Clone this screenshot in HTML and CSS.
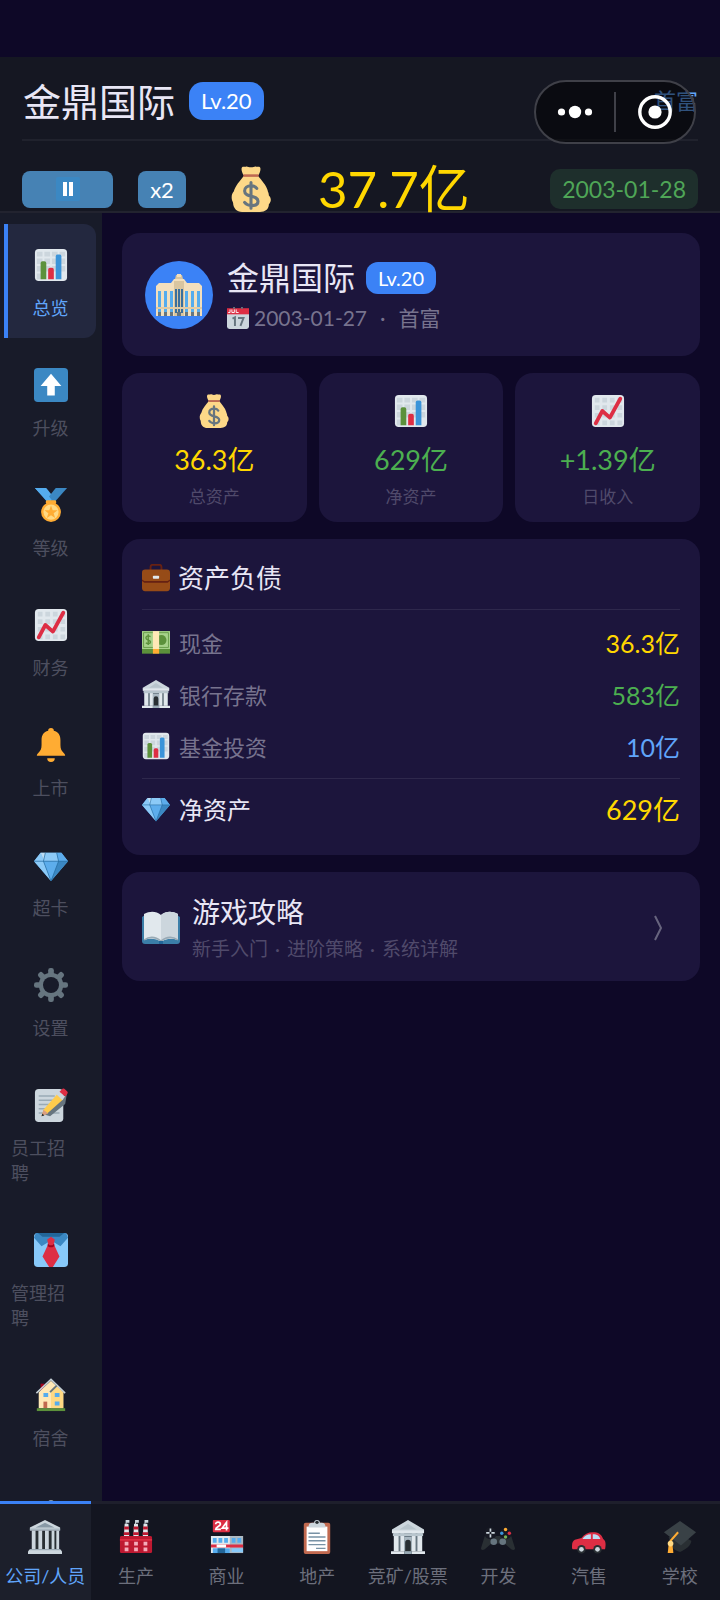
FILE: index.html
```html
<!DOCTYPE html>
<html lang="zh-CN">
<head>
<meta charset="utf-8">
<meta name="viewport" content="width=device-width, initial-scale=1">
<title>金鼎国际</title>
<link rel="stylesheet" href="styles.css">
</head>
<body>
<svg class="sprite" aria-hidden="true">
  <symbol id="chart" viewBox="0 0 36 36">
    <rect x="1" y="1" width="34" height="34" rx="4" fill="#e1e8ed"/>
    <path d="M3 4h6v5H3zM11 4h6v5h-6zM19 4h6v5h-6zM27 4h6v5h-6zM3 11h6v6H3zM11 11h6v6h-6zM19 11h6v6h-6zM27 11h6v6h-6zM3 19h6v6H3zM11 19h6v6h-6zM19 19h6v6h-6zM27 19h6v6h-6zM3 27h6v6H3z" fill="#ccd6dd"/>
    <path d="M7 33V16a2 2 0 0 1 2-2h2a2 2 0 0 1 2 2v17z" fill="#5c913b"/>
    <path d="M15 33V23a2 2 0 0 1 2-2h2a2 2 0 0 1 2 2v10z" fill="#dd2e44"/>
    <path d="M23 33V9a2 2 0 0 1 2-2h2a2 2 0 0 1 2 2v24z" fill="#3b94d9"/>
  </symbol>
  <symbol id="trend" viewBox="0 0 36 36">
    <rect x="1" y="1" width="34" height="34" rx="4" fill="#e1e8ed"/>
    <path d="M4 4h5v5H4zM12 4h5v5h-5zM20 4h5v5h-5zM28 4h5v5h-5zM4 12h5v5H4zM12 12h5v5h-5zM20 12h5v5h-5zM28 12h5v5h-5zM4 20h5v5H4zM12 20h5v5h-5zM20 20h5v5h-5zM28 20h5v5h-5zM4 28h5v5H4zM12 28h5v5h-5zM20 28h5v5h-5zM28 28h5v5h-5z" fill="#ccd6dd"/>
    <path d="M5 31l7-13 8 7L31 5" fill="none" stroke="#dd2e44" stroke-width="4" stroke-linecap="round" stroke-linejoin="round"/>
  </symbol>
  <symbol id="bag" viewBox="0 0 36 36">
    <path d="M32 23c0-2-1-3-1-4-1-4-5-8-8-12H13C9 12 6 15 4.500 20c-1 1-2 3-1.500 6 0 1 1 2 1 3 0 4 3 7 7 7h14c4 0 7-2 7-6 2-2 2-5 0-7z" fill="#fdd888"/>
    <path d="M12 7c-1-2-2-5-1-6s2 0 3-.5 2 .5 4 .5 3-1 4-.5 2-.5 3 .5 0 4-1 6z" fill="#fdd888"/>
    <path d="M12 6.500h12v2H12z" fill="#bf6952"/>
    <path d="M22.500 17.500c-1-1.500-3-2-4.500-2-3 0-5 1.500-5 4 0 5.500 10.500 3 10.500 8 0 2.500-2.500 3.500-5 3.500-2 0-4-.5-5.500-2.500M18 13v20" fill="none" stroke="#67757f" stroke-width="2.400" stroke-linecap="round"/>
  </symbol>
  <symbol id="gem" viewBox="0 0 36 36">
    <path d="M7 5h22l7 9-18 21L0 14z" fill="#5dadec"/>
    <path d="M7 5l4 9H0z" fill="#8ccaf7"/><path d="M7 5h5l-1 9z" fill="#bdddf4"/>
    <path d="M12 5h12l2 9H10z" fill="#8ccaf7"/><path d="M29 5l7 9H26l-2-9z" fill="#5dadec"/>
    <path d="M0 14h10l8 21z" fill="#8ccaf7"/><path d="M10 14h16l-8 21z" fill="#5dadec"/><path d="M26 14h10L18 35z" fill="#3b88c3"/>
    <path d="M0 14h36M12 5l-2 9 8 21 8-21-2-9" fill="none" stroke="#226699" stroke-width=".7"/>
  </symbol>
  <symbol id="bank" viewBox="0 0 36 36">
    <path d="M3 14h30v19H3z" fill="#66757f"/>
    <path d="M3 14h5v19H3zM10 14h4v19h-4zM22 14h4v19h-4zM28 14h5v19h-5z" fill="#e1e8ed"/>
    <path d="M14 18h8v15h-8z" fill="#aab8c2"/><path d="M15 33V24a3 3 0 0 1 6 0v9z" fill="#292f33"/>
    <path d="M18 0l17 10v2H1v-2z" fill="#ccd6dd"/><path d="M18 4l9 6H9z" fill="#b8c5cd"/>
    <path d="M1 11h34v3H1z" fill="#e1e8ed"/><path d="M2 14h32v3H2z" fill="#b8c5cd"/>
    <path d="M0 33h14v3H0zM22 33h14v3H22z" fill="#e1e8ed"/><path d="M14 33h8v3h-8z" fill="#99aab5"/>
  </symbol>
  <symbol id="classical" viewBox="0 0 36 36">
    <path d="M4 12h28v19H4z" fill="#292f33"/>
    <path d="M4 11h4v20H4zM11 11h4v20h-4zM18 11h4v20h-4zM25 11h3v20h-3zM30 11h3v20h-3z" fill="#ccd6dd"/>
    <path d="M18 0l16 8v3H2V8z" fill="#ccd6dd"/><path d="M18 3l10 5H8z" fill="#8899a6"/>
    <path d="M2 9h32v2H2z" fill="#aab8c2"/><path d="M2 31h32l2 2v3H0v-3z" fill="#ccd6dd"/><path d="M2 31h32v1H2z" fill="#99aab5"/>
  </symbol>
  <symbol id="gear" viewBox="0 0 36 36">
    <g fill="#66757f"><rect x="15" y="0" width="6" height="36" rx="2.500"/><rect x="15" y="0" width="6" height="36" rx="2.500" transform="rotate(45 18 18)"/><rect x="15" y="0" width="6" height="36" rx="2.500" transform="rotate(90 18 18)"/><rect x="15" y="0" width="6" height="36" rx="2.500" transform="rotate(135 18 18)"/><circle cx="18" cy="18" r="13"/></g>
    <circle cx="18" cy="18" r="8.500" fill="#181b29"/>
  </symbol>
</svg>

<div class="app">
  <header class="header">
    <div class="title-row">
      <h1 class="company">金鼎国际</h1>
      <span class="level">Lv.20</span>
      <span class="rank">首富</span>
      <div class="capsule">
        <button class="capsule-btn" aria-label="更多"><svg width="36" height="16" viewBox="0 0 36 16" fill="#fff"><circle cx="4.500" cy="8" r="3.600"/><circle cx="18" cy="8" r="6.200"/><circle cx="31.500" cy="8" r="3.600"/></svg></button>
        <span class="capsule-line"></span>
        <button class="capsule-btn" aria-label="关闭"><svg width="34" height="34" viewBox="0 0 34 34"><circle cx="17" cy="17" r="15.200" fill="none" stroke="#fff" stroke-width="3.400"/><circle cx="17" cy="17" r="6.600" fill="#fff"/></svg></button>
      </div>
    </div>
    <div class="money-row">
      <button class="control pause" aria-label="暂停"><svg width="24" height="24" viewBox="0 0 24 24"><rect width="24" height="24" rx="2" fill="#3b88c3"/><path d="M7 5h4v14H7zM13 5h4v14h-4z" fill="#fff"/></svg></button>
      <button class="control speed">x2</button>
      <svg class="money-icon"><use href="#bag"/></svg>
      <strong class="money">37.7亿</strong>
      <time class="today">2003-01-28</time>
    </div>
  </header>

  <div class="body">
    <nav class="sidebar">
      <button class="side-item active"><svg class="icon"><use href="#chart"/></svg><span>总览</span></button>
      <button class="side-item"><svg class="icon" viewBox="0 0 36 36"><rect width="36" height="36" rx="4" fill="#3b88c3"/><path d="M18 6l11 13h-7v10h-8V19H7z" fill="#fff"/></svg><span>升级</span></button>
      <button class="side-item"><svg class="icon" viewBox="0 0 36 36"><path d="M1 0h12l8 10-6 6z" fill="#55acee"/><path d="M35 0H23l-8 10 6 6z" fill="#3b88c3"/><path d="M1 0h8l10 13-4 2z" fill="#55acee"/><rect x="12.500" y="13" width="11" height="4" rx="1.500" fill="#ffac33"/><circle cx="18" cy="25.500" r="10.500" fill="#ffac33"/><circle cx="18" cy="25.500" r="8" fill="#ffd983"/><path d="M18 18.500l1.800 5 5.200.1-4.200 3.200 1.600 5-4.400-3-4.400 3 1.600-5-4.200-3.200 5.200-.1z" fill="#ffac33"/></svg><span>等级</span></button>
      <button class="side-item"><svg class="icon"><use href="#trend"/></svg><span>财务</span></button>
      <button class="side-item"><svg class="icon" viewBox="0 0 36 36"><path d="M18 0a3 3 0 0 0-3 3C10 4 8 8 8 13v5c0 4-1 6-3 8-1 1-2 2-2 3.500h30c0-1.500-1-2.500-2-3.500-2-2-3-4-3-8v-5c0-5-2-9-7-10a3 3 0 0 0-3-3zM14 32h8a4 4 0 0 1-8 0z" fill="#ffac33"/></svg><span>上市</span></button>
      <button class="side-item"><svg class="icon"><use href="#gem"/></svg><span>超卡</span></button>
      <button class="side-item"><svg class="icon"><use href="#gear"/></svg><span>设置</span></button>
      <button class="side-item"><svg class="icon" viewBox="0 0 36 36"><rect x="1" y="1" width="30" height="35" rx="4" fill="#ccd6dd"/><path d="M5 8.500h17M5 13h15M5 17.500h12M5 22h9M5 26.500h22" stroke="#99aab5" stroke-width="1.500"/><path d="M11 28l21-18 3-5-2 12-16 13z" fill="#67757f"/><path d="M8 30l2-7L25 6l6 6-17 15z" fill="#ffcc4d"/><path d="M8 30l2-7 5 4z" fill="#d99e82"/><path d="M8 30l.8-3 2.200 2z" fill="#292f33"/><path d="M24 7l3-3 6 5-3 4z" fill="#ccd6dd"/><path d="M27 4l3-3c1-1 2-.5 3 .5l2 2c1 1 1 2 0 3l-2 2.500z" fill="#dd2e44"/></svg><span class="wrap">员工招聘</span></button>
      <button class="side-item"><svg class="icon" viewBox="0 0 36 36"><rect width="36" height="36" rx="4" fill="#88c9f9"/><path d="M2 0h32l2 5-8 9-10-6-10 6-8-9z" fill="#3b88c3"/><path d="M4 0h28l-5 4H9z" fill="#226699"/><path d="M14 7l4-3 4 3-1 5 6 13-7 11h-4L9 25l6-13z" fill="#dd2e44"/><path d="M14.500 11l2 2h3l2-2v3l-2 1h-3l-2-1z" fill="#a0041e"/></svg><span class="wrap">管理招聘</span></button>
      <button class="side-item"><svg class="icon" viewBox="0 0 36 36"><path d="M7 6h4v8H7z" fill="#a0041e"/><path d="M5 15L18 3l13 12v17H5z" fill="#ffe8b6"/><path d="M18 13l6-5 7 7v17H18z" fill="#ffd983"/><path d="M2.500 16L18 1.500 33 16" fill="none" stroke="#c5d0d6" stroke-width="1.600"/><path d="M17 15l7-7" stroke="#66757f" stroke-width="2"/><path d="M10 16h5v4h-5zM22 16h5v4h-5zM22 25h5v4h-5z" fill="#55acee"/><path d="M10 25h4v7h-4z" fill="#c1694f"/><path d="M3 32h30v3H3z" fill="#5c913b"/></svg><span>宿舍</span></button>
      <button class="side-item" aria-hidden="true" tabindex="-1"><svg class="icon" viewBox="0 0 36 36"><circle cx="18" cy="5" r="3" fill="#8899a6"/><path d="M4 16L18 6l14 10v18H4z" fill="#66757f"/></svg></button>
    </nav>

    <main class="main">
      <section class="card profile">
        <div class="avatar"><svg width="48" height="44" viewBox="0 0 48 44"><path d="M1 13l3-3h12l3-4h10l3 4h12l3 3v30H1z" fill="#f3dfbd"/><path d="M20 6l1-4h6l1 4z" fill="#d9c5a0"/><path d="M22 1h4v3h-4z" fill="#f3dfbd"/><path d="M19 8h10v35H19z" fill="#d9c5a0"/><path d="M3 18h3v22H3zM9 18h3v22H9zM15 18h3v22h-3zM30 18h3v22h-3zM36 18h3v22h-3zM42 18h3v22h-3z" fill="#55acee"/><path d="M20 16h2v24h-2zM23 16h2v24h-2zM26 16h2v24h-2z" fill="#3b6f9c"/><path d="M1 34h46v2H1z" fill="#e1cba4"/><path d="M3 39h3v4H3zM9 39h3v4H9zM15 39h3v4h-3zM22 39h4v4h-4zM30 39h3v4h-3zM36 39h3v4h-3zM42 39h3v4h-3z" fill="#66757f"/></svg></div>
        <div class="profile-text">
          <div class="profile-name"><h2>金鼎国际</h2><span class="level small">Lv.20</span></div>
          <p class="profile-meta"><svg width="22" height="22" viewBox="0 0 36 36"><path d="M0 9h36v23a4 4 0 0 1-4 4H4a4 4 0 0 1-4-4z" fill="#ccd6dd"/><path d="M0 2h36v10H0z" fill="#dd2e44"/><path d="M10 0h3v3h-3zM23 0h3v3h-3z" fill="#66757f"/><path d="M5 4v5H2M8 4v5h4V4M15 4v5h4" fill="none" stroke="#fff" stroke-width="1.500"/><path d="M9 19l4-2v14M18 18h9l-5 13" fill="none" stroke="#66757f" stroke-width="3.200"/></svg><time>2003-01-27</time><span>·</span><span>首富</span></p>
        </div>
      </section>

      <section class="stats">
        <div class="card stat"><svg class="icon"><use href="#bag"/></svg><strong class="gold">36.3亿</strong><span>总资产</span></div>
        <div class="card stat"><svg class="icon"><use href="#chart"/></svg><strong class="green">629亿</strong><span>净资产</span></div>
        <div class="card stat"><svg class="icon"><use href="#trend"/></svg><strong class="green">+1.39亿</strong><span>日收入</span></div>
      </section>

      <section class="card balance">
        <h2 class="balance-title"><svg class="row-icon" viewBox="0 0 36 36"><path d="M11 8V4c0-2 1-3 3-3h8c2 0 3 1 3 3v4" fill="none" stroke="#662113" stroke-width="2.500"/><rect x="0" y="7" width="36" height="28" rx="4" fill="#964b17"/><path d="M0 20l3 2h30l3-2v2l-3 2H3l-3-2z" fill="#662113"/><rect x="14" y="15" width="8" height="4" rx="1" fill="#e1e8ed"/></svg>资产负债</h2>
        <dl class="rows">
          <div class="row"><dt><svg class="row-icon" viewBox="0 0 36 36"><path d="M0 4h36v29H0z" fill="#5c913b"/><path d="M0 4h36v23H0z" fill="#a7d28b"/><path d="M2 6h32v19H2z" fill="none" stroke="#5c913b"/><circle cx="25" cy="15.500" r="6.500" fill="#5c913b"/><path d="M11 11c-4-2-6 0-6 2 0 3 6 2 6 5 0 2-4 3-6 1M8 8v14" fill="none" stroke="#5c913b" stroke-width="1.800"/><path d="M14 4h8v23h-8z" fill="#ffe8b6"/><path d="M14 27h8v6h-8z" fill="#ffac33"/></svg>现金</dt><dd class="gold">36.3亿</dd></div>
          <div class="row"><dt><svg class="row-icon"><use href="#bank"/></svg>银行存款</dt><dd class="green">583亿</dd></div>
          <div class="row"><dt><svg class="row-icon"><use href="#chart"/></svg>基金投资</dt><dd class="blue">10亿</dd></div>
          <div class="row total"><dt><svg class="row-icon"><use href="#gem"/></svg>净资产</dt><dd class="gold">629亿</dd></div>
        </dl>
      </section>

      <a class="card guide" href="#">
        <svg width="38" height="34" viewBox="0 0 38 34"><path d="M0 6l3-2h32l3 2v24c0 2-1 3-3 3H3c-2 0-3-1-3-3z" fill="#3b7ea8"/><path d="M2 3c6-3 12-3 17 1 5-4 11-4 17-1v26c-6-2-12-2-17 2-5-4-11-4-17-2z" fill="#e1e8ed"/><path d="M19 4c5-4 11-4 17-1v26c-6-2-12-2-17 2z" fill="#ccd6dd"/><path d="M2 29c6-4 12-3 17 1 5-4 11-5 17-1" fill="none" stroke="#99aab5" stroke-width="1.500"/><path d="M17 30h4v3h-4z" fill="#226699"/></svg>
        <span class="guide-text"><span class="guide-title">游戏攻略</span><span class="guide-sub"><span>新手入门</span><span>·</span><span>进阶策略</span><span>·</span><span>系统详解</span></span></span>
        <svg class="chevron" width="11" height="26" viewBox="0 0 11 26"><path d="M2 1l6 12-6 12" fill="none" stroke="#67647e" stroke-width="2"/></svg>
      </a>
    </main>
  </div>

  <footer class="footer">
    <nav class="tabs">
      <button class="tab active"><svg class="icon"><use href="#classical"/></svg><span>公司/人员</span></button>
      <button class="tab"><svg class="icon" viewBox="0 0 36 36"><path d="M6 4h4l1 16H5zM16 4h4l1 16h-6zM26 4h4l1 16h-6z" fill="#e1e8ed"/><path d="M5.500 7h5v3h-5zM5 13h6v3H5zM15.500 7h5v3h-5zM15 13h6v3h-6zM25.500 7h5v3h-5zM25 13h6v3h-6z" fill="#be1931"/><path d="M7 0h4v3H8v2H7zM17 0h4v3h-3v2h-1zM27 0h4v3h-3v2h-1z" fill="#ccd6dd"/><path d="M1 19c0-2 1-2 3-2h28c2 0 3 0 3 2v14c0 2-1 2-3 2H4c-2 0-3 0-3-2z" fill="#be1931"/><path d="M1 20h34v2H1z" fill="#dd2e44"/><path d="M6 23h4v4H6zM16 23h4v4h-4zM26 23h4v4h-4zM6 29h4v4H6zM16 29h4v4h-4zM26 29h4v4h-4z" fill="#f4abba"/></svg><span>生产</span></button>
      <button class="tab"><svg class="icon" viewBox="0 0 36 36"><rect x="3" width="18" height="13" rx="1" fill="#dd2e44"/><path d="M6 4.500c0-3 5-3 5 0 0 2-5 3-5 5.500h5.500M17.500 11V2.500L13 8.500h6.500" fill="none" stroke="#fff" stroke-width="1.800"/><path d="M1 17h34v18H1z" fill="#e1e8ed"/><path d="M21 17h14v18H21z" fill="#aab8c2"/><path d="M3 19h4v5H3zM9 19h4v5H9zM15 19h4v5h-4zM23 19h4v5h-4zM29 19h4v5h-4z" fill="#55acee"/><path d="M1 26h34v3H1z" fill="#dd2e44"/><path d="M7 26h10v3H7z" fill="#fff"/><path d="M3 30h18v5H3z" fill="#55acee"/><path d="M8 30h8v5H8z" fill="#226699"/><path d="M23 30h12v4H23z" fill="#88c9f9"/></svg><span>商业</span></button>
      <button class="tab"><svg class="icon" viewBox="0 0 36 36"><rect x="4" y="3" width="28" height="33" rx="2" fill="#c1694f"/><path d="M7 7h22v26H7z" fill="#fff"/><path d="M9 8c0-3 1-5 4-5h2a3 3 0 0 1 6 0h2c3 0 4 2 4 5z" fill="#ccd6dd"/><circle cx="18" cy="2.500" r="1.800" fill="#292f33"/><path d="M9 14h12M9 18h18M9 22h18M9 26h18M17 30h10" stroke="#7892a5" stroke-width="1.400"/></svg><span>地产</span></button>
      <button class="tab"><svg class="icon"><use href="#bank"/></svg><span>竞矿/股票</span></button>
      <button class="tab"><svg class="icon" viewBox="0 0 36 36"><path d="M4 17h28l4 13c0 2-2 2-4 1l-7-6H11l-7 6c-2 1-4 1-4-1z" fill="#292f33"/><circle cx="10" cy="14" r="6.500" fill="#171923"/><circle cx="26" cy="14" r="6.500" fill="#171923"/><circle cx="13.500" cy="23" r="3.500" fill="#66757f"/><circle cx="23" cy="23" r="3.500" fill="#66757f"/><path d="M10 9v3.500M10 15v3.500M5.500 13.700H9M11 13.700h3.500" stroke="#ccd6dd" stroke-width="1.800"/><circle cx="26" cy="10" r="1.800" fill="#ffac33"/><circle cx="22" cy="14" r="1.800" fill="#3b94d9"/><circle cx="30" cy="14" r="1.800" fill="#dd2e44"/><circle cx="26" cy="18" r="1.800" fill="#77b255"/></svg><span>开发</span></button>
      <button class="tab"><svg class="icon" viewBox="0 0 36 36"><path d="M0 28c0-4 1-6 3-7l7-2c3-4 7-6 12-6 6 0 9 2 11 7 3 2 3 6 2 11H2c-2 0-2-1-2-3z" fill="#dd2e44"/><path d="M11 20c2-3 5-5 9-5v5zM22 15c5 0 7 2 8 5h-8z" fill="#bdddf4"/><circle cx="10" cy="31" r="4.500" fill="#292f33"/><circle cx="27" cy="31" r="4.500" fill="#292f33"/><circle cx="10" cy="31" r="2.500" fill="#ccd6dd"/><circle cx="27" cy="31" r="2.500" fill="#ccd6dd"/></svg><span>汽售</span></button>
      <button class="tab"><svg class="icon" viewBox="0 0 36 36"><path d="M6 18l11-3 13 7c0 5-6 9-12 12-4-1-8-4-10-7z" fill="#292f33"/><path d="M1 13L18 1l17 12-16 14z" fill="#394146"/><path d="M16 13l-8 9v10" fill="none" stroke="#ffac33" stroke-width="2.200"/><path d="M6 26h4l1 9H5z" fill="#ffac33"/><circle cx="8" cy="25" r="3" fill="#ffd983"/></svg><span>学校</span></button>
    </nav>
  </footer>
</div>
</body>
</html>
```

FILE: styles.css
```css
* { box-sizing: border-box; margin: 0; }
body {
  background: #0e0827;
  color: #e8e6f5;
  font-family: Lato, "Noto Sans CJK SC", sans-serif;
}
button { border: 0; background: none; padding: 0; color: inherit; font-family: inherit; }
h1, h2, strong { font-weight: 400; }
svg { display: block; flex: none; }
.sprite { position: absolute; width: 0; height: 0; }
.icon { width: 34px; height: 34px; }
.gold { color: #ffd700; }
.green { color: #4caf50; }
.blue { color: #60a5fa; }

.app { display: flex; flex-direction: column; height: 100vh; padding-top: 57px; overflow: hidden; }

.header {
  flex: none;
  padding: 0 22px;
  background: #151722;
  border-bottom: 2px solid #22232f;
}
.title-row {
  position: relative;
  display: flex;
  align-items: center;
  gap: 14px;
  height: 84px;
  padding-top: 6px;
  border-bottom: 2px solid #20222d;
}
.company { font-size: 38px; line-height: 48px; margin-left: 1px; }
.level {
  padding: 0 12px;
  border-radius: 14px;
  background: #3b82f6;
  color: #fff;
  font-size: 22px;
  line-height: 38px;
}
.level.small { font-size: 20px; line-height: 32px; border-radius: 12px; }
.rank { margin-left: auto; color: #60a5fa; font-size: 22px; line-height: 32px; }
.capsule {
  position: absolute;
  top: 23px;
  right: 2px;
  display: flex;
  align-items: center;
  width: 162px;
  height: 64px;
  border: 2px solid #3f4048;
  border-radius: 32px;
  background: rgba(0, 0, 0, .5);
}
.capsule-btn { flex: 1; display: flex; justify-content: center; }
.capsule-line { width: 2px; height: 40px; background: #3f4048; }

.money-row { display: flex; align-items: center; height: 70px; padding-top: 26px; }
.control {
  display: flex;
  align-items: center;
  justify-content: center;
  height: 37px;
  border-radius: 8px;
  background: #4682b4;
  color: #fff;
  font-size: 22px;
}
.pause { width: 91px; }
.speed { width: 48px; margin-left: 25px; }
.money-icon { width: 46px; height: 46px; margin-left: 42px; }
.money { margin-left: 44px; color: #ffd700; font-size: 51px; line-height: 44px; }
.today {
  margin-left: auto;
  padding: 0 12px;
  border-radius: 10px;
  background: #1e2f2c;
  color: #4fa657;
  font-size: 23px;
  line-height: 40px;
}

.body { flex: 1; display: flex; min-height: 0; }
.sidebar {
  flex: none;
  display: flex;
  flex-direction: column;
  gap: 6px;
  width: 102px;
  padding: 11px 6px 0 4px;
  background: #181b29;
  overflow: hidden;
}
.side-item {
  flex: none;
  display: flex;
  flex-direction: column;
  align-items: center;
  gap: 14px;
  min-height: 114px;
  padding: 24px 6px 17px 3px;
  border-left: 4px solid transparent;
  border-radius: 0 12px 12px 0;
  color: #4d4f5f;
  font-size: 18px;
  line-height: 25px;
  text-align: left;
}
.side-item.active { border-left-color: #3b82f6; background: #23283f; color: #60a5fa; }
.side-item .wrap { align-self: flex-start; width: 60px; }

.main { flex: 1; min-width: 0; display: flex; flex-direction: column; gap: 17px; padding: 20px; }
.card { border-radius: 18px; background: #1c153c; }
.profile { display: flex; align-items: center; gap: 14px; height: 123px; padding: 0 23px; }
.avatar {
  display: flex;
  align-items: center;
  justify-content: center;
  width: 68px;
  height: 68px;
  border-radius: 50%;
  background: #3b82f6;
}
.profile-name { display: flex; align-items: center; gap: 11px; }
.profile-name h2 { font-size: 32px; line-height: 46px; }
.profile-meta { display: flex; align-items: center; gap: 5px; color: #77738e; font-size: 21px; line-height: 34px; }
.profile-meta span { margin-left: 8px; }

.stats { display: grid; grid-template-columns: repeat(3, 1fr); gap: 12px; }
.stat { display: flex; flex-direction: column; align-items: center; padding: 21px 0 12px; }
.stat strong { margin-top: 12px; font-size: 27px; line-height: 40px; }
.stat span { margin-top: 4px; color: #504a6b; font-size: 17px; line-height: 26px; }

.balance { padding: 16px 20px 18px; }
.balance-title {
  display: flex;
  align-items: center;
  gap: 8px;
  padding-bottom: 8px;
  border-bottom: 1px solid #2e284c;
  font-size: 26px;
  line-height: 46px;
}
.row-icon { width: 28px; height: 28px; }
.rows { padding-top: 6px; }
.row { display: flex; align-items: center; justify-content: space-between; height: 52px; }
.row dt { display: flex; align-items: center; gap: 9px; color: #77738e; font-size: 22px; }
.row dd { margin: 0; font-size: 25px; }
.total { height: 59px; margin-top: 6px; border-top: 1px solid #2e284c; }
.total dt { color: #e8e6f5; font-size: 24px; }
.total dd { font-size: 27px; }

.guide { display: flex; align-items: center; gap: 12px; padding: 19px 36px 17px 20px; color: inherit; text-decoration: none; }
.guide-text { flex: 1; display: flex; flex-direction: column; }
.guide-title { font-size: 28px; line-height: 42px; }
.guide-sub { display: flex; gap: 7px; color: #504a6b; font-size: 19px; line-height: 31px; }

.footer { flex: none; background: #131520; overflow: hidden; }
.tabs { display: grid; grid-template-columns: repeat(8, 1fr); margin-right: -5px; }
.tab {
  display: flex;
  flex-direction: column;
  align-items: center;
  gap: 9px;
  height: 99px;
  padding-top: 16px;
  border-top: 3px solid #1e1f2c;
  color: #6c6f7c;
  font-size: 18px;
  line-height: 26px;
  white-space: nowrap;
}
.tab.active { border-top-color: #3b82f6; background: #1c1f2b; color: #60a5fa; }
```
